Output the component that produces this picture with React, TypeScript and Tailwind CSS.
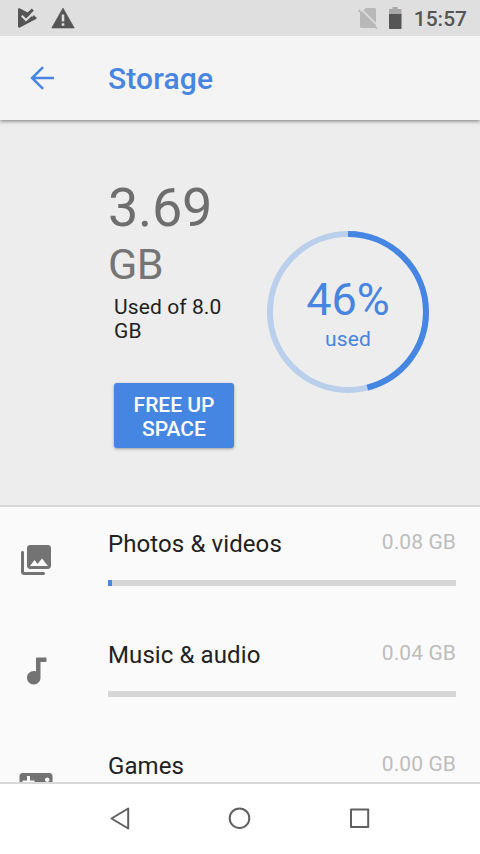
const items = [
  { name: "Photos & videos", size: "0.08 GB", percent: 1.15, icon: "photos" },
  { name: "Music & audio", size: "0.04 GB", percent: 0, icon: "music" },
  { name: "Games", size: "0.00 GB", percent: 0, icon: "games" },
];

const icons: Record<string, string> = {
  photos:
    "M22 16V4c0-1.100-.9-2-2-2H8c-1.100 0-2 .9-2 2v12c0 1.100.9 2 2 2h12c1.100 0 2-.9 2-2zm-11-4l2.030 2.710L16 11l4 5H8l3-4zM2 7v13c0 1.100.9 2 2 2h13c.55 0 1-.45 1-1s-.45-1-1-1H4V7c0-.55-.45-1-1-1s-1 .45-1 1z",
  music:
    "M12.700 3c-.4 0-.7.3-.7.7v8.580c-.47-.17-.97-.28-1.500-.28C8.010 12 6 14.010 6 16.500S8.010 21 10.500 21s4.500-2.010 4.500-4.500V6h3.300c.4 0 .7-.3.7-.7V3.700c0-.4-.3-.7-.7-.7h-5.600z",
  games:
    "M21 6H3c-1.100 0-2 .9-2 2v8c0 1.100.9 2 2 2h18c1.100 0 2-.9 2-2V8c0-1.100-.9-2-2-2zm-10 7H8v3H6v-3H3v-2h3V8h2v3h3v2zm4.500 2c-.83 0-1.500-.67-1.500-1.500s.67-1.500 1.500-1.500 1.500.67 1.500 1.500-.67 1.500-1.500 1.500zm4-3c-.83 0-1.500-.67-1.500-1.500S18.670 9 19.500 9s1.500.67 1.500 1.500-.67 1.500-1.500 1.500z",
};

const StatusBar = () => (
  <div className="z-20 flex h-9 shrink-0 items-center justify-between bg-[#dfdfdf] pl-[17px] pr-[13px]">
    <div className="flex items-center gap-[13px]">
      <svg width="21" height="22" viewBox="0 0 21 22">
        <path d="M1 2.500c0-1 1-1.500 2-1l15.500 8c1.500.8 1.500 2 0 2.800L3 20.500c-1 .5-2 0-2-1z" fill="#555" />
        <path d="M10 2.500h10v7.500h-5z" fill="#dfdfdf" />
        <path d="M7 6.500l2.300 2.300L15.800 2.600" fill="none" stroke="#555" strokeWidth="3" />
        <path d="M4.800 8.800l4.200 4.200 9-8.500" fill="none" stroke="#dfdfdf" strokeWidth="2" />
        <path d="M10.500 14.500l6.500-6.500 2 2.500z" fill="#555" />
      </svg>
      <svg width="24" height="22" viewBox="0 0 24 22">
        <path d="M12 1L.7 21h22.600z" fill="#555" stroke="#555" strokeWidth=".6" strokeLinejoin="round" />
        <path d="M10.700 7.500h2.600v7h-2.600zM10.700 16.200h2.600v2.500h-2.600z" fill="#dfdfdf" />
      </svg>
    </div>
    <div className="flex items-center">
      <svg className="mr-[11px]" width="20" height="22" viewBox="0 0 20 22">
        <path d="M8 1h8.500c.9 0 1.500.7 1.500 1.500v17c0 .9-.6 1.500-1.500 1.500h-13c-.9 0-1.500-.6-1.500-1.500V6z" fill="#b8b8b8" />
        <path d="M2 1l18 18" stroke="#dfdfdf" strokeWidth="1.600" />
        <path d="M.5 3l18.500 18.500" stroke="#b8b8b8" strokeWidth="1.700" />
      </svg>
      <svg className="mb-px mr-[12px]" width="13" height="24" viewBox="0 0 13 24">
        <path d="M1 3h2.500V1h5v2h3c.6 0 1 .4 1 1v5H0V4c0-.6.4-1 1-1z" fill="#a8a8a8" />
        <path d="M0 8h12.500v14c0 .6-.4 1-1 1H1c-.6 0-1-.4-1-1z" fill="#555" />
      </svg>
      <span className="pt-0.5 text-[21px] font-medium leading-[34px] text-[#555]">15:57</span>
    </div>
  </div>
);

const Header = () => (
  <header className="z-10 flex h-[84px] shrink-0 items-center bg-[#f4f4f4] pl-6 shadow-[0_1px_4px_rgba(0,0,0,0.5)]">
    <svg className="mr-12" width="36" height="36" viewBox="0 0 24 24" fill="none" stroke="#4785e0" strokeWidth="1.700">
      <path d="M20 12H5M12.700 4.700L5.400 12l7.300 7.300" />
    </svg>
    <h1 className="pt-0.5 text-[30px] font-medium leading-9 tracking-[0.15px] text-[#4785e0]">Storage</h1>
  </header>
);

const Summary = () => (
  <section className="flex h-[387px] shrink-0 border-b-2 border-[#d9d9d9] bg-[#ededed] pl-[108px] pt-14">
    <div className="w-[132px]">
      <p className="text-[54px] leading-[64px] tracking-[-0.3px] text-[#6e6e6e]">3.69</p>
      <p className="text-[43px] leading-[49px] tracking-[-0.5px] text-[#757575]">GB</p>
      <p className="ml-1.5 mt-1.5 text-[21px] leading-6 tracking-[0.1px] text-[#212121]">Used of 8.0 GB</p>
      <button className="ml-1.5 mt-9 block h-[65px] w-[120px] translate-y-1 rounded-[3px] bg-[#4586e2] px-2 pt-0.5 text-[21px] font-medium leading-6 text-white shadow-[0_1px_3px_rgba(0,0,0,0.35)]">
        FREE UP SPACE
      </button>
    </div>
    <div className="ml-[27px] mt-[55px] grid size-[162px]">
      <svg className="col-start-1 row-start-1" width="162" height="162" viewBox="0 0 162 162" fill="none" strokeWidth="6">
        <circle cx="81" cy="81" r="78" stroke="#bacfeb" />
        <circle cx="81" cy="81" r="78" stroke="#4586e2" pathLength="100" strokeDasharray="46 54" transform="rotate(-90 81 81)" />
      </svg>
      <div className="col-start-1 row-start-1 pt-[42px] text-center text-[#4785e0]">
        <p className="text-[45px] leading-[53px]">46%</p>
        <p className="pt-px text-[21px] leading-6 tracking-[0.2px]">used</p>
      </div>
    </div>
  </section>
);

const NavBar = () => (
  <nav className="flex h-[72px] shrink-0 items-center justify-center gap-[84px] border-t-2 border-[#d9d9d9] bg-white pb-0.5">
    <svg width="36" height="36" viewBox="0 0 36 36" fill="none" stroke="#606060" strokeWidth="2" strokeLinejoin="round">
      <path d="M26.200 8.500v20L9.500 18.500z" />
    </svg>
    <svg width="36" height="36" viewBox="0 0 36 36" fill="none" stroke="#606060" strokeWidth="2">
      <circle cx="17.500" cy="18.200" r="9.800" />
    </svg>
    <svg width="36" height="36" viewBox="0 0 36 36" fill="none" stroke="#606060" strokeWidth="2" strokeLinejoin="round">
      <path d="M9 9.500h17.200v17.500H9z" />
    </svg>
  </nav>
);

const App = () => {
  return (
    <div className="flex h-[854px] w-[480px] flex-col overflow-hidden bg-[#fafafa] font-['Roboto',sans-serif]">
      <StatusBar />
      <Header />
      <Summary />
      <main className="min-h-0 flex-1 overflow-hidden">
        {items.map(({ name, size, percent, icon }) => (
          <div key={name} className="flex h-[111px] pl-[18px] pr-6">
            <svg className="mr-[54px] mt-[35px] shrink-0" width="36" height="36" viewBox="0 0 24 24" fill="#737373">
              <path d={icons[icon]} />
            </svg>
            <div className="flex-1 pt-[23px]">
              <div className="flex h-[50px] justify-between">
                <span className="text-2xl leading-7 tracking-[0.1px] text-[#212121]">{name}</span>
                <span className="text-[21px] leading-6 tracking-[0.1px] text-[#bdbdbd]">{size}</span>
              </div>
              <div className="h-1.5 bg-[#d6d6d6]">
                <div className="h-full bg-[#4586e2]" style={{ width: `${percent}%` }} />
              </div>
            </div>
          </div>
        ))}
      </main>
      <NavBar />
    </div>
  );
};

export default App;
